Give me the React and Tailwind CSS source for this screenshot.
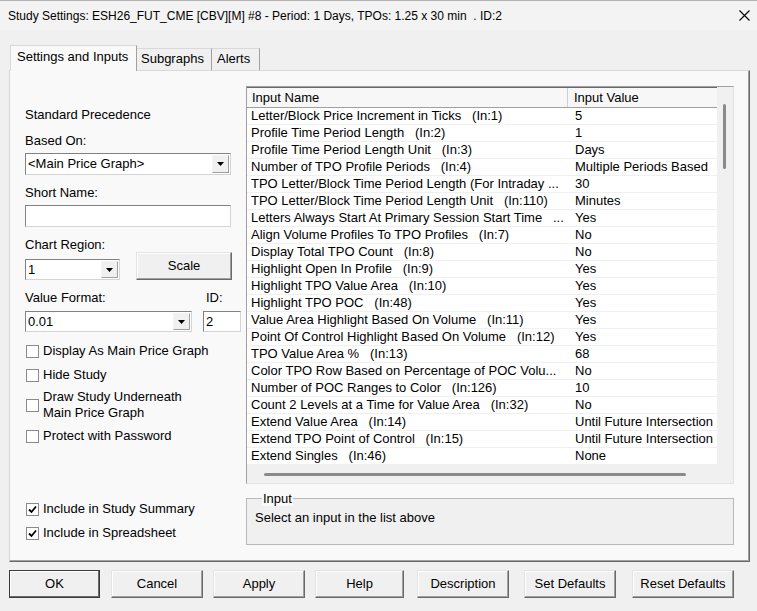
import React from "react";

const rows = [
  ["Letter/Block Price Increment in Ticks   (In:1)", "5"],
  ["Profile Time Period Length   (In:2)", "1"],
  ["Profile Time Period Length Unit   (In:3)", "Days"],
  ["Number of TPO Profile Periods   (In:4)", "Multiple Periods Based"],
  ["TPO Letter/Block Time Period Length (For Intraday ...", "30"],
  ["TPO Letter/Block Time Period Length Unit   (In:110)", "Minutes"],
  ["Letters Always Start At Primary Session Start Time   ...", "Yes"],
  ["Align Volume Profiles To TPO Profiles   (In:7)", "No"],
  ["Display Total TPO Count   (In:8)", "No"],
  ["Highlight Open In Profile   (In:9)", "Yes"],
  ["Highlight TPO Value Area   (In:10)", "Yes"],
  ["Highlight TPO POC   (In:48)", "Yes"],
  ["Value Area Highlight Based On Volume   (In:11)", "Yes"],
  ["Point Of Control Highlight Based On Volume   (In:12)", "Yes"],
  ["TPO Value Area %   (In:13)", "68"],
  ["Color TPO Row Based on Percentage of POC Volu...", "No"],
  ["Number of POC Ranges to Color   (In:126)", "10"],
  ["Count 2 Levels at a Time for Value Area   (In:32)", "No"],
  ["Extend Value Area   (In:14)", "Until Future Intersection"],
  ["Extend TPO Point of Control   (In:15)", "Until Future Intersection"],
  ["Extend Singles   (In:46)", "None"],
];

const Arrow = () => (
  <svg width="7" height="4" viewBox="0 0 7 4">
    <path d="M0 0 H7 L3.5 4 Z" fill="#000" />
  </svg>
);

const Combo = ({ text, className }) => (
  <div className={`flex bg-white border border-t-[#828282] border-l-[#828282] border-r-[#d4d4d4] border-b-[#d4d4d4] ${className}`}>
    <div className="flex-1 pl-[2px] flex items-center whitespace-pre overflow-hidden">{text}</div>
    <div className="w-[17px] m-[1px] flex items-center justify-center bg-[#f0f0f0] border border-t-[#f4f4f4] border-l-[#f4f4f4] border-r-[#a0a0a0] border-b-[#a0a0a0]">
      <Arrow />
    </div>
  </div>
);

const TextBox = ({ text, className }) => (
  <div className={`flex items-center pl-[2px] bg-white border border-t-[#828282] border-l-[#828282] border-r-[#d4d4d4] border-b-[#d4d4d4] ${className}`}>
    {text}
  </div>
);

const Check = ({ checked, children, className }) => (
  <div className={`flex items-center ${className}`}>
    <div className="ml-[1px] w-[13px] h-[13px] shrink-0 bg-white border border-[#8a8a8a] flex items-center justify-center">
      {checked && (
        <svg width="9" height="9" viewBox="0 0 9 9">
          <path d="M1 4.5 L3.5 7 L8 1.5" fill="none" stroke="#000" strokeWidth="1.8" />
        </svg>
      )}
    </div>
    <div className="ml-[4px] leading-[16px]">{children}</div>
  </div>
);

const Button = ({ children, className, isDefault }) => (
  <div
    className={`h-[28px] flex items-center justify-center bg-[#f0f0f0] border ${
      isDefault ? "border-[#3c3c3c] shadow-[inset_-1px_-1px_0_#696969,inset_1px_1px_0_#fff]" : "border-t-[#e3e3e3] border-l-[#e3e3e3] border-r-[#696969] border-b-[#696969] shadow-[inset_-1px_-1px_0_#a0a0a0,inset_1px_1px_0_#fff]"
    } ${className}`}
  >
    {children}
  </div>
);

export default function App() {
  return (
    <div className="w-[757px] h-[611px] bg-[#f0f0f0] text-[13px] text-black overflow-hidden border-t border-[#b4b4b4]" style={{ fontFamily: '"Liberation Sans", Arial, sans-serif' }}>
      {/* title bar */}
      <div className="h-[29px] flex items-center justify-between pl-[8px] pr-[7px] bg-[#f3f3f3] text-[12px]">
        <span className="whitespace-pre">Study Settings: ESH26_FUT_CME [CBV][M] #8 - Period: 1 Days, TPOs: 1.25 x 30 min  . ID:2</span>
        <svg width="11" height="11" viewBox="0 0 11 11">
          <path d="M0.5 0.5 L10.5 10.5 M10.5 0.5 L0.5 10.5" stroke="#000" strokeWidth="1.1" />
        </svg>
      </div>

      {/* tabs */}
      <div className="mt-[14px] ml-[10px] flex items-end h-[26px] relative z-10">
        <div className="w-[127px] h-[26px] -mb-[1px] bg-[#f9f9f9] border border-b-0 border-t-[#d9d9d9] border-l-[#d9d9d9] border-r-[#a0a0a0] pl-[6px] pt-[1px]">
          Settings and Inputs
        </div>
        <div className="w-[75px] h-[22px] bg-[#f0f0f0] border-t border-r border-t-[#d9d9d9] border-r-[#a0a0a0] pl-[4px]">
          Subgraphs
        </div>
        <div className="w-[48px] h-[22px] bg-[#f0f0f0] border-t border-r border-t-[#d9d9d9] border-r-[#a0a0a0] pl-[5px]">
          Alerts
        </div>
      </div>

      {/* panel */}
      <div className="ml-[9px] w-[741px] h-[492px] bg-[#f9f9f9] border border-t-[#d9d9d9] border-l-[#d9d9d9] border-r-[#696969] border-b-[#696969] shadow-[inset_-1px_-1px_0_#a0a0a0] flex pl-[15px]">
        {/* left column */}
        <div className="w-[216px] flex flex-col">
          <div className="mt-[36px] leading-[15px]">Standard Precedence</div>
          <div className="mt-[11px] leading-[15px]">Based On:</div>
          <Combo text="<Main Price Graph>" className="mt-[5px] w-[206px] h-[22px]" />
          <div className="mt-[10px] leading-[15px]">Short Name:</div>
          <TextBox text="" className="mt-[5px] w-[206px] h-[22px]" />
          <div className="mt-[10px] leading-[15px]">Chart Region:</div>
          <div className="flex items-end gap-[16px]">
            <Combo text="1" className="w-[95px] h-[21px]" />
            <Button className="w-[96px] h-[26px]">Scale</Button>
          </div>
          <div className="mt-[10px] leading-[15px] flex">
            <span className="w-[181px]">Value Format:</span>
            <span>ID:</span>
          </div>
          <div className="mt-[6px] flex gap-[11px]">
            <Combo text="0.01" className="w-[167px] h-[21px]" />
            <TextBox text="2" className="w-[38px] h-[21px]" />
          </div>
          <Check className="mt-[11px]">Display As Main Price Graph</Check>
          <Check className="mt-[8px]">Hide Study</Check>
          <Check className="mt-[6px]">
            Draw Study Underneath
            <br />
            Main Price Graph
          </Check>
          <Check className="mt-[7px]">Protect with Password</Check>
          <Check checked className="mt-[57px]">Include in Study Summary</Check>
          <Check checked className="mt-[8px]">Include in Spreadsheet</Check>
        </div>

        {/* right column */}
        <div className="ml-[5px] w-[488px] flex flex-col">
          <div className="mt-[15px] h-[398px] border border-t-[#a0a0a0] border-l-[#a0a0a0] border-r-[#e3e3e3] border-b-[#e3e3e3] flex">
            <div className="w-[470px] flex flex-col bg-white">
              <div className="h-[21px] flex bg-[#f7f7f7] border-b border-[#a0a0a0] border-t border-t-[#696969]">
                <div className="w-[321px] pl-[5px] flex items-center border-r border-[#d0d0d0]">Input Name</div>
                <div className="flex-1 pl-[6px] flex items-center">Input Value</div>
              </div>
              {rows.map(([name, value], i) => (
                <div key={i} className="h-[17px] flex border-b border-[#f0f0f0] leading-[16px]">
                  <div className="w-[321px] pl-[4px] whitespace-pre overflow-hidden">{name}</div>
                  <div className="w-[149px] pl-[7px] whitespace-pre overflow-hidden">{value}</div>
                </div>
              ))}
              <div className="flex-1 bg-[#f0f0f0] pt-[8px] pl-[17px]">
                <div className="w-[422px] h-[3px] bg-[#8a8a8a] rounded-full" />
              </div>
            </div>
            <div className="w-[16px] bg-[#f0f0f0] pt-[17px] pl-[6px]">
              <div className="w-[3px] h-[65px] bg-[#8a8a8a] rounded-full" />
            </div>
          </div>

          <fieldset className="mt-[7px] h-[54px] border border-[#b9b9b9] bg-[#f0f0f0] pl-[8px]">
            <legend className="ml-[7px] px-[1px] leading-[15px] bg-[#f9f9f9]">Input</legend>
            <div className="mt-[4px] leading-[15px]">Select an input in the list above</div>
          </fieldset>
        </div>
      </div>

      {/* bottom buttons */}
      <div className="mt-[8px] ml-[9px] flex">
        <Button isDefault className="w-[91px]">OK</Button>
        <Button className="ml-[11px] w-[92px]">Cancel</Button>
        <Button className="ml-[10px] w-[92px]">Apply</Button>
        <Button className="ml-[10px] w-[89px]">Help</Button>
        <Button className="ml-[13px] w-[92px]">Description</Button>
        <Button className="ml-[15px] w-[92px]">Set Defaults</Button>
        <Button className="ml-[16px] w-[102px]">Reset Defaults</Button>
      </div>
    </div>
  );
}
